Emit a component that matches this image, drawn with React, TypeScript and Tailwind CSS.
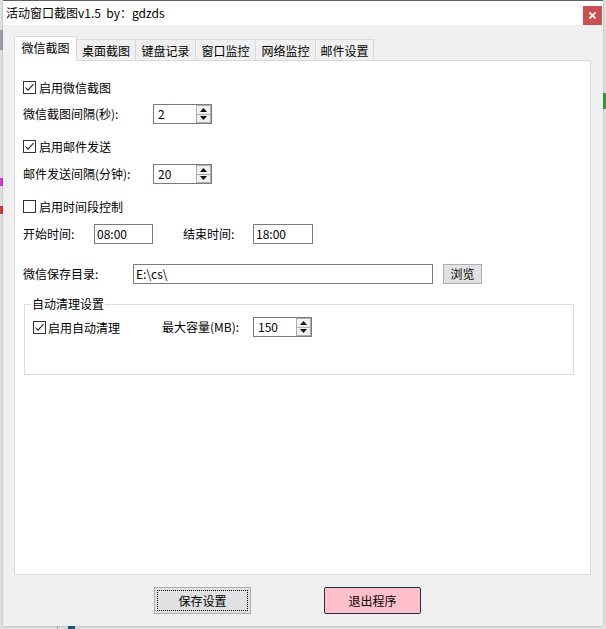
import React from 'react';

const font = "font-['Noto_Sans_CJK_SC','Noto_Sans',sans-serif]";

function CheckBox({ checked, label, gap = 'ml-[3px]' }: { checked: boolean; label: string; gap?: string }) {
  return (
    <div className="flex items-center h-[15px]">
      <span className="w-[13px] h-[13px] border border-[#333] bg-white flex items-center justify-center shrink-0">
        {checked && (
          <svg width="11" height="11" viewBox="0 0 11 11">
            <path d="M1.5 5.5 L4 8.2 L9.5 2.2" stroke="#222" strokeWidth="1.1" fill="none" />
          </svg>
        )}
      </span>
      <span className={`${gap} text-[12px] leading-[15px] text-black whitespace-nowrap`}>{label}</span>
    </div>
  );
}

function SpinBox({ value }: { value: string }) {
  return (
    <div className="w-[59px] h-[20px] border border-[#7a7a7a] bg-white flex shrink-0">
      <span className="flex-1 pl-[4px] text-[12px] leading-[18px] text-black">{value}</span>
      <div className="w-[15px] h-[18px] flex flex-col border border-[#adadad] bg-[#f0f0f0] my-0">
        <div className="flex-1 flex items-center justify-center border-b border-[#adadad]">
          <svg width="7" height="4" viewBox="0 0 7 4">
            <path d="M3.5 0 L7 4 L0 4 Z" fill="#111" />
          </svg>
        </div>
        <div className="flex-1 flex items-center justify-center">
          <svg width="7" height="4" viewBox="0 0 7 4">
            <path d="M0 0 L7 0 L3.5 4 Z" fill="#111" />
          </svg>
        </div>
      </div>
    </div>
  );
}

function TextBox({ value, width }: { value: string; width: string }) {
  return (
    <div className={`${width} h-[20px] border border-[#7a7a7a] bg-white shrink-0 pl-[2px] text-[12px] leading-[18px] text-black`}>
      {value}
    </div>
  );
}

const tabs = [
  { name: '桌面截图', w: 'w-[59px]' },
  { name: '键盘记录', w: 'w-[60px]' },
  { name: '窗口监控', w: 'w-[60px]' },
  { name: '网络监控', w: 'w-[60px]' },
  { name: '邮件设置', w: 'w-[58px]' },
];

export default function App() {
  return (
    <div className={`w-[606px] h-[629px] bg-[#e4e4e4] relative overflow-hidden ${font}`}>
      {/* desktop behind the window */}
      <div className="absolute left-0 top-[30px] w-[3px] h-[20px] bg-[#9aa3ad]" />
      <div className="absolute left-0 top-[178px] w-[3px] h-[8px] bg-[#d63bd6]" />
      <div className="absolute left-0 top-[206px] w-[3px] h-[8px] bg-[#d43c3c]" />
      <div className="absolute right-0 top-[93px] w-[3px] h-[16px] bg-[#2fa32f]" />
      <div className="absolute left-[57px] bottom-0 w-px h-[3px] bg-[#a0a0a0]" />
      <div className="absolute left-[68px] bottom-0 w-[7px] h-[3px] bg-[#1b5a8a]" />

      {/* window */}
      <div className="absolute left-[3px] top-0 w-[600px] h-[626px] border-t border-[#5f5f5f] bg-[#f0f0f0] flex flex-col shadow-[0_0_3px_rgba(0,0,0,0.25)]">
        <div className="h-[24px] bg-white flex items-center justify-between shrink-0">
          <span className="pl-[3px] text-[12px] leading-[16px] text-black whitespace-pre">活动窗口截图v1.5  by：gdzds</span>
          <div className="w-[19px] h-[19px] mr-[1px] mt-[4px] bg-[#c75050] flex items-center justify-center">
            <svg width="7" height="7" viewBox="0 0 7 7">
              <path d="M0.5 0.5 L6.5 6.5 M6.5 0.5 L0.5 6.5" stroke="#fff" strokeWidth="1.6" />
            </svg>
          </div>
        </div>

        <div className="flex flex-col pl-[11px] pt-[11px]">
          {/* tab strip */}
          <div className="flex items-end h-[25px]">
            <div className="relative z-10 w-[63px] h-[25px] bg-white border border-b-0 border-[#d9d9d9] flex justify-center pt-[3px] text-[12px] leading-[16px] text-black">
              微信截图
            </div>
            {tabs.map((t) => (
              <div
                key={t.name}
                className={`${t.w} h-[22px] bg-[#f0f0f0] border-t border-r border-[#d9d9d9] flex justify-center pt-[3px] text-[12px] leading-[16px] text-black`}
              >
                {t.name}
              </div>
            ))}
          </div>

          {/* tab panel */}
          <div className="-mt-px w-[577px] h-[515px] bg-white border border-[#d9d9d9] flex flex-col pl-[8px]">
            <div className="mt-[19px]">
              <CheckBox checked label="启用微信截图" />
            </div>
            <div className="mt-[9px] flex items-center">
              <span className="w-[130px] text-[12px] leading-[16px] text-black">微信截图间隔(秒):</span>
              <SpinBox value="2" />
            </div>
            <div className="mt-[15px]">
              <CheckBox checked label="启用邮件发送" />
            </div>
            <div className="mt-[10px] flex items-center">
              <span className="w-[130px] text-[12px] leading-[16px] text-black">邮件发送间隔(分钟):</span>
              <SpinBox value="20" />
            </div>
            <div className="mt-[15px]">
              <CheckBox checked={false} label="启用时间段控制" />
            </div>
            <div className="mt-[10px] flex items-center">
              <span className="w-[71px] text-[12px] leading-[16px] text-black">开始时间:</span>
              <TextBox value="08:00" width="w-[59px]" />
              <span className="ml-[30px] w-[70px] text-[12px] leading-[16px] text-black">结束时间:</span>
              <TextBox value="18:00" width="w-[60px]" />
            </div>
            <div className="mt-[20px] flex items-center">
              <span className="w-[110px] text-[12px] leading-[16px] text-black">微信保存目录:</span>
              <TextBox value="E:\cs\" width="w-[300px]" />
              <div className="ml-[10px] w-[39px] h-[20px] bg-[#e1e1e1] border border-[#adadad] flex items-center justify-center text-[12px] leading-[16px] text-black">
                浏览
              </div>
            </div>

            {/* group box */}
            <div className="relative mt-[20px] ml-px w-[550px] h-[71px] border border-[#dcdcdc] pl-[8px] pt-[12px]">
              <span className="absolute left-[6px] -top-[9px] bg-white px-[1px] text-[12px] leading-[16px] text-black">
                自动清理设置
              </span>
              <div className="flex items-center h-[20px]">
                <div className="w-[129px]">
                  <CheckBox checked label="启用自动清理" gap="ml-[2px]" />
                </div>
                <span className="w-[91px] text-[12px] leading-[16px] text-black">最大容量(MB):</span>
                <SpinBox value="150" />
              </div>
            </div>
          </div>

          {/* buttons */}
          <div className="mt-[12px] flex pl-[140px]">
            <div className="w-[97px] h-[27px] bg-[#e1e1e1] border border-[#adadad] p-[2px]">
              <div className="w-full h-full border border-dotted border-black flex items-center justify-center text-[12px] leading-[16px] text-black">
                保存设置
              </div>
            </div>
            <div className="ml-[73px] w-[97px] h-[27px] bg-[#ffc0cb] border border-[#1f3152] rounded-[2px] flex items-center justify-center text-[12px] leading-[16px] text-black">
              退出程序
            </div>
          </div>
        </div>
      </div>
    </div>
  );
}
